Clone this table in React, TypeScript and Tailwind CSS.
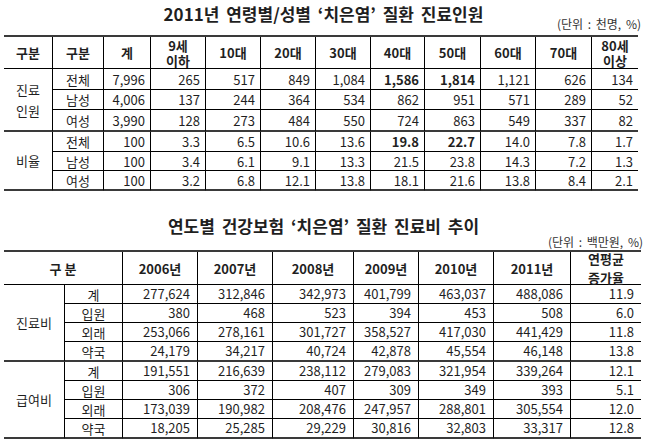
import clsx from "clsx";

type Row = { label: string; values: string[]; bold?: number[] };

const t1Head = ["구분", "구분", "계", "9세\n이하", "10대", "20대", "30대", "40대", "50대", "60대", "70대", "80세\n이상"];

const t1Groups: { name: string; rows: Row[] }[] = [
  {
    name: "진료\n인원",
    rows: [
      { label: "전체", values: ["7,996", "265", "517", "849", "1,084", "1,586", "1,814", "1,121", "626", "134"], bold: [5, 6] },
      { label: "남성", values: ["4,006", "137", "244", "364", "534", "862", "951", "571", "289", "52"] },
      { label: "여성", values: ["3,990", "128", "273", "484", "550", "724", "863", "549", "337", "82"] },
    ],
  },
  {
    name: "비율",
    rows: [
      { label: "전체", values: ["100", "3.3", "6.5", "10.6", "13.6", "19.8", "22.7", "14.0", "7.8", "1.7"], bold: [5, 6] },
      { label: "남성", values: ["100", "3.4", "6.1", "9.1", "13.3", "21.5", "23.8", "14.3", "7.2", "1.3"] },
      { label: "여성", values: ["100", "3.2", "6.8", "12.1", "13.8", "18.1", "21.6", "13.8", "8.4", "2.1"] },
    ],
  },
];

const t2Head = ["2006년", "2007년", "2008년", "2009년", "2010년", "2011년", "연평균\n증가율"];

const t2Groups: { name: string; rows: Row[] }[] = [
  {
    name: "진료비",
    rows: [
      { label: "계", values: ["277,624", "312,846", "342,973", "401,799", "463,037", "488,086", "11.9"] },
      { label: "입원", values: ["380", "468", "523", "394", "453", "508", "6.0"] },
      { label: "외래", values: ["253,066", "278,161", "301,727", "358,527", "417,030", "441,429", "11.8"] },
      { label: "약국", values: ["24,179", "34,217", "40,724", "42,878", "45,554", "46,148", "13.8"] },
    ],
  },
  {
    name: "급여비",
    rows: [
      { label: "계", values: ["191,551", "216,639", "238,112", "279,083", "321,954", "339,264", "12.1"] },
      { label: "입원", values: ["306", "372", "407", "309", "349", "393", "5.1"] },
      { label: "외래", values: ["173,039", "190,982", "208,476", "247,957", "288,801", "305,554", "12.0"] },
      { label: "약국", values: ["18,205", "25,285", "29,229", "30,816", "32,803", "33,317", "12.8"] },
    ],
  },
];

interface CellProps {
  text: string;
  first?: boolean;
  thick?: boolean;
  num?: boolean;
  bold?: boolean;
  head?: boolean;
  span?: 2 | 3 | 4;
  lead?: string;
}

function Cell({ text, first, thick, num, bold, head, span, lead }: CellProps) {
  return (
    <div
      className={clsx(
        "flex items-center whitespace-pre-line border-black",
        !first && "border-l",
        thick ? "border-b-2 border-b-[#3a3a3a]" : "border-b",
        num ? "justify-end pr-[5px]" : "justify-center text-center",
        (head || bold) && "font-bold",
        span === 2 && "col-span-2",
        span === 3 && "row-span-3",
        span === 4 && "row-span-4",
        lead ?? "leading-[15px]"
      )}
    >
      {text}
    </div>
  );
}

function AgeTable() {
  return (
    <div className="mx-[4px] grid w-[634px] grid-cols-[48px_51px_47px_55px_55px_55px_55px_54px_56px_55px_56px_47px] grid-rows-[32px_21px_20px_22px_20px_19px_20px] border-t-2 border-[#3a3a3a] text-[13px]">
      {t1Head.map((h, i) => (
        <Cell key={i} text={h} head first={i === 0} />
      ))}
      {t1Groups.map((g) => [
        <Cell key={g.name} text={g.name} first thick span={3} lead="leading-[21px]" />,
        ...g.rows.flatMap((r, ri) => {
          const last = ri === g.rows.length - 1;
          return [
            <Cell key={g.name + r.label} text={r.label} thick={last} />,
            ...r.values.map((v, vi) => (
              <Cell key={g.name + r.label + vi} text={v} num thick={last} bold={r.bold?.includes(vi)} />
            )),
          ];
        }),
      ])}
    </div>
  );
}

function CostTable() {
  return (
    <div className="mx-[4px] grid w-[637px] grid-cols-[60px_58px_75px_75px_81px_65px_75px_77px_71px] grid-rows-[33px_19px_19px_19px_20px_19px_19px_19px_20px] border-t-2 border-[#3a3a3a] text-[13px]">
      <Cell text="구 분" head first span={2} />
      {t2Head.map((h, i) => (
        <Cell key={i} text={h} head lead="leading-[19px]" />
      ))}
      {t2Groups.map((g) => [
        <Cell key={g.name} text={g.name} first thick span={4} />,
        ...g.rows.flatMap((r, ri) => {
          const last = ri === g.rows.length - 1;
          return [
            <Cell key={g.name + r.label} text={r.label} thick={last} />,
            ...r.values.map((v, vi) => (
              <div
                key={g.name + r.label + vi}
                className={clsx(
                  "flex items-center justify-end border-l border-black pr-[7px]",
                  last ? "border-b-2 border-b-[#3a3a3a]" : "border-b"
                )}
              >
                {v}
              </div>
            )),
          ];
        }),
      ])}
    </div>
  );
}

export default function App() {
  return (
    <div className="h-[447px] w-[647px] bg-white font-['Noto_Sans_CJK_KR','Noto_Sans',sans-serif] text-[#1f1f1f]">
      <div className="pt-[3px] text-center text-[17px] font-semibold leading-[22px] [word-spacing:3px]">
        2011년 연령별/성별 ‘치은염’ 질환 진료인원
      </div>
      <div className="-mt-[8px] mb-[4px] pr-[6px] text-right text-[12px] leading-[14px] text-[#333] [word-spacing:2px]">
        (단위 : 천명, %)
      </div>
      <AgeTable />
      <div className="pt-[24px] text-center text-[17px] font-semibold leading-[22px] [word-spacing:3px]">
        연도별 건강보험 ‘치은염’ 질환 진료비 추이
      </div>
      <div className="pr-[4px] text-right text-[12px] leading-[10px] text-[#333] [word-spacing:2px]">
        (단위 : 백만원, %)
      </div>
      <div className="pt-[3px]">
        <CostTable />
      </div>
    </div>
  );
}
